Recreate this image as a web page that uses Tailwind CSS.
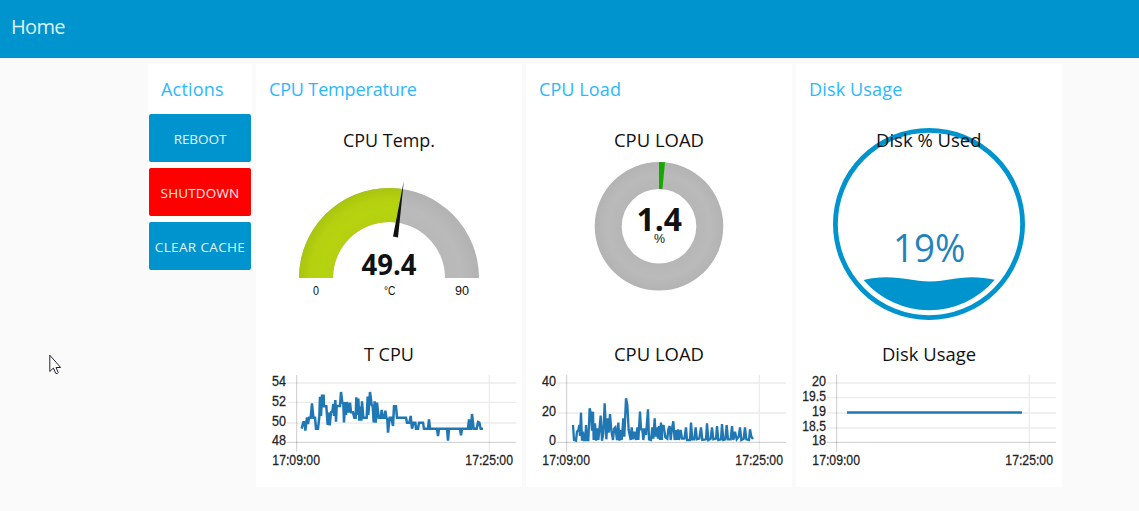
<!DOCTYPE html>
<html lang="en">
<head>
<meta charset="utf-8">
<title>Home</title>
<script src="https://cdn.jsdelivr.net/npm/@tailwindcss/browser@4"></script>
</head>
<body class="h-screen overflow-hidden bg-[#fafafa] font-['Open_Sans',sans-serif] text-[#111]">
<header class="flex h-[58px] items-center bg-[#0094ce] px-[11px] pb-[4px]">
  <h1 class="text-[20px] leading-none tracking-[-0.65px] text-[#dff1f9]">Home</h1>
</header>
<main class="flex items-start gap-1 pt-[6px] pl-[148px]">
  <section class="flex h-[207px] w-[104px] flex-col bg-white">
    <h2 class="flex h-[50px] shrink-0 items-center pl-[13px] text-[18px] tracking-[0.2px] text-[#2bb8ff]">Actions</h2>
    <div class="flex flex-col gap-[6px] px-px">
      <button class="h-12 rounded-[2px] bg-[#0094ce] pt-[2px] text-[13.5px] tracking-[-0.05px] whitespace-nowrap text-[#e6f5fb]">REBOOT</button>
      <button class="h-12 rounded-[2px] bg-[#ff0000] pt-[2px] text-[13.5px] tracking-[0.15px] whitespace-nowrap text-[#ffeaea]">SHUTDOWN</button>
      <button class="h-12 rounded-[2px] bg-[#0094ce] pt-[2px] text-[13.5px] tracking-[0.35px] whitespace-nowrap text-[#e6f5fb]">CLEAR CACHE</button>
    </div>
  </section>

  <section class="flex h-[423px] w-[266px] flex-col bg-white">
    <h2 class="flex h-[50px] shrink-0 items-center pl-[13px] text-[18px] tracking-[-0.15px] text-[#2bb8ff]">CPU Temperature</h2>
    <svg class="block h-[226px] w-[266px]" viewBox="0 114 266 226">
      <defs>
        <radialGradient id="lime" gradientUnits="userSpaceOnUse" cx="133" cy="278" r="90"><stop offset=".62" stop-color="#b4cf11"/><stop offset=".75" stop-color="#b6d30f"/><stop offset=".88" stop-color="#b4d00f"/><stop offset="1" stop-color="#a9c40e"/></radialGradient>
        <radialGradient id="gray" gradientUnits="userSpaceOnUse" cx="133" cy="278" r="90"><stop offset=".62" stop-color="#b8b8b8"/><stop offset=".8" stop-color="#bababa"/><stop offset="1" stop-color="#b2b2b2"/></radialGradient>
      </defs>
      <text x="87" y="147" font-size="18" textLength="92" lengthAdjust="spacingAndGlyphs" fill="#111">CPU Temp.</text>
      <path fill="url(#gray)" d="M43 278A90 90 0 0 1 223 278H189A56 56 0 0 0 77 278Z"/>
      <path fill="url(#lime)" d="M43 278A90 90 0 0 1 146.8 189.1L141.6 222.7A56 56 0 0 0 77 278Z"/>
      <path fill="#111" d="M147.8 181L142 237.6L137 236.6Z"/>
      <text x="105.5" y="275" font-size="28" font-weight="700" textLength="55" lengthAdjust="spacingAndGlyphs" fill="#111">49.4</text>
      <g font-family="Liberation Sans" fill="#111">
        <text x="57" y="295" font-size="12" textLength="6" lengthAdjust="spacingAndGlyphs">0</text>
        <text x="128" y="295" font-size="12" textLength="11.5" lengthAdjust="spacingAndGlyphs">°C</text>
        <text x="199" y="295" font-size="12.5" textLength="14" lengthAdjust="spacingAndGlyphs">90</text>
      </g>
    </svg>
    <svg class="block h-[147px] w-[266px]" viewBox="0 0 798 441">
      <text x="324" y="63" font-size="54" textLength="150" lengthAdjust="spacingAndGlyphs" fill="#111">T CPU</text>
      <path stroke="#000" stroke-opacity=".08" stroke-width="4" fill="none" d="M92 129H780M92 187H780M92 249H780M700 105V335"/>
      <path stroke="#000" stroke-opacity=".2" stroke-width="3" fill="none" d="M92 307H780M122 105V335"/>
      <g font-family="Liberation Sans" font-size="44" fill="#222" stroke="#222" stroke-width=".8" text-anchor="end">
        <text x="90" y="138" textLength="42" lengthAdjust="spacingAndGlyphs">54</text>
        <text x="90" y="197" textLength="42" lengthAdjust="spacingAndGlyphs">52</text>
        <text x="90" y="258" textLength="42" lengthAdjust="spacingAndGlyphs">50</text>
        <text x="90" y="316" textLength="42" lengthAdjust="spacingAndGlyphs">48</text>
        <text x="192" y="376" textLength="143" lengthAdjust="spacingAndGlyphs">17:09:00</text>
        <text x="771" y="376" textLength="143" lengthAdjust="spacingAndGlyphs">17:25:00</text>
      </g>
      <polyline fill="none" stroke="#1f77b4" stroke-width="7.5" points="137,266 142,247 146,247 148,272 153,232 156,252 159,233 164,233 168,190 172,233 177,233 180,266 186,266 190,230 192,170 195,228 198,167 203,167 204,199 211,199 215,255 218,218 221,256 225,217 229,215 232,192 234,228 238,180 240,245 242,198 252,198 255,156 259,188 262,190 264,247 267,186 270,225 273,186 277,218 282,188 285,217 291,217 295,233 299,233 301,172 304,225 307,176 310,242 313,200 316,242 318,184 322,233 332,233 335,170 337,225 342,156 347,195 350,198 353,247 356,184 359,248 363,188 368,233 374,233 377,210 380,233 385,233 388,212 391,233 394,238 396,278 401,233 406,233 411,258 414,199 420,199 423,233 450,233 453,248 460,248 464,228 468,266 473,248 478,248 480,266 486,266 489,248 501,248 504,266 516,266 519,238 522,266 543,266 546,288 549,266 573,266 576,302 579,266 612,266 615,286 618,266 636,266 639,238 642,266 645,266 648,222 653,266 662,266 666,246 670,248 674,266 681,266"/>
    </svg>
  </section>

  <section class="flex h-[423px] w-[266px] flex-col bg-white">
    <h2 class="flex h-[50px] shrink-0 items-center pl-[13px] text-[18px] tracking-[0.1px] text-[#2bb8ff]">CPU Load</h2>
    <svg class="block h-[226px] w-[266px]" viewBox="0 114 266 226">
      <defs>
        <radialGradient id="ring" gradientUnits="userSpaceOnUse" cx="133" cy="226.3" r="64.3"><stop offset=".58" stop-color="#b6b6b6"/><stop offset=".8" stop-color="#bababa"/><stop offset="1" stop-color="#b3b3b3"/></radialGradient>
      </defs>
      <text x="88" y="147" font-size="18" textLength="90" lengthAdjust="spacingAndGlyphs" fill="#111">CPU LOAD</text>
      <path fill="url(#ring)" fill-rule="evenodd" d="M133 162a64.3 64.3 0 1 1 0 128.6a64.3 64.3 0 1 1 0-128.6ZM133 189a37.3 37.3 0 1 0 0 74.6a37.3 37.3 0 1 0 0-74.6Z"/>
      <path fill="#14a800" d="M133 162A64.3 64.3 0 0 1 139 162.3L136.4 189.2L133 189Z"/>
      <text x="110.500" y="231" font-size="31.5" font-weight="700" textLength="45.500" lengthAdjust="spacingAndGlyphs" fill="#111">1.4</text>
      <text x="128" y="243" font-size="12" font-family="Liberation Sans" textLength="11" lengthAdjust="spacingAndGlyphs" fill="#111">%</text>
    </svg>
    <svg class="block h-[147px] w-[266px]" viewBox="0 0 798 441">
      <text x="264" y="63" font-size="54" textLength="270" lengthAdjust="spacingAndGlyphs" fill="#111">CPU LOAD</text>
      <path stroke="#000" stroke-opacity=".08" stroke-width="4" fill="none" d="M92 129H780M92 219H780M700 105V335"/>
      <path stroke="#000" stroke-opacity=".2" stroke-width="3" fill="none" d="M92 307H780M122 105V335"/>
      <g font-family="Liberation Sans" font-size="44" fill="#222" stroke="#222" stroke-width=".8" text-anchor="end">
        <text x="90" y="138" textLength="42" lengthAdjust="spacingAndGlyphs">40</text>
        <text x="90" y="229" textLength="42" lengthAdjust="spacingAndGlyphs">20</text>
        <text x="90" y="316" textLength="21" lengthAdjust="spacingAndGlyphs">0</text>
        <text x="192" y="376" textLength="143" lengthAdjust="spacingAndGlyphs">17:09:00</text>
        <text x="771" y="376" textLength="143" lengthAdjust="spacingAndGlyphs">17:25:00</text>
      </g>
      <polyline fill="none" stroke="#1f77b4" stroke-width="7" points="141,255 144,300 150,302 153,275 157,270 160,255 162,288 165,218 168,302 171,275 174,300 178,300 180,255 183,300 187,300 191,205 195,222 198,272 201,215 203,300 207,250 210,302 213,265 217,300 220,270 224,227 228,302 232,280 236,190 240,270 241,298 245,235 248,278 252,222 256,272 261,300 264,266 268,262 273,300 277,248 280,302 283,270 287,300 292,235 295,290 300,175 304,195 308,270 314,300 317,262 321,298 325,275 330,300 334,262 337,300 342,215 345,268 349,268 352,300 356,265 360,285 366,208 369,298 375,300 379,262 382,296 386,235 389,290 393,262 396,296 399,258 402,300 405,248 408,300 408,257 413,258 418,292 424,296 427,268 431,258 434,300 438,265 442,244 446,300 450,270 453,300 456,268 459,300 464,270 468,296 475,296 480,262 483,300 492,300 495,248 499,298 505,298 509,262 513,298 520,296 525,262 529,300 540,298 543,250 547,300 554,296 558,262 562,298 570,296 573,258 577,300 585,298 588,252 592,300 598,298 602,255 606,298 614,298 618,258 622,300 627,275 632,298 638,290 642,262 646,300 653,296 657,262 661,298 669,300 672,268 676,290 681,297"/>
    </svg>
  </section>

  <section class="flex h-[423px] w-[266px] flex-col bg-white">
    <h2 class="flex h-[50px] shrink-0 items-center pl-[13px] text-[18px] tracking-[0.15px] text-[#2bb8ff]">Disk Usage</h2>
    <svg class="block h-[226px] w-[266px]" viewBox="0 114 266 226">
      <circle cx="133" cy="224" r="93.6" fill="none" stroke="#0094ce" stroke-width="4.8"/>
      <path fill="#0094ce" d="M67.5 280C75 278.4 82 277.3 90 277.3C107 277.3 118 281.5 134 281.5C150 281.5 160 277.3 176 277.3C184 277.3 191 278.2 198.8 279.7A86.2 86.2 0 0 1 67.5 280Z"/>
      <text x="80" y="147" font-size="18" textLength="105.500" lengthAdjust="spacingAndGlyphs" fill="#111">Disk % Used</text>
      <text x="97" y="262" font-size="37.5" textLength="72.5" lengthAdjust="spacingAndGlyphs" fill="#1f83bd">19%</text>
    </svg>
    <svg class="block h-[147px] w-[266px]" viewBox="0 0 798 441">
      <text x="258" y="63" font-size="54" textLength="282" lengthAdjust="spacingAndGlyphs" fill="#111">Disk Usage</text>
      <path stroke="#000" stroke-opacity=".08" stroke-width="4" fill="none" d="M92 129H780M92 173H780M92 219H780M92 264H780M700 105V335"/>
      <path stroke="#000" stroke-opacity=".2" stroke-width="3" fill="none" d="M92 307H780M122 105V335"/>
      <g font-family="Liberation Sans" font-size="44" fill="#222" stroke="#222" stroke-width=".8" text-anchor="end">
        <text x="90" y="138" textLength="42" lengthAdjust="spacingAndGlyphs">20</text>
        <text x="90" y="182" textLength="71" lengthAdjust="spacingAndGlyphs">19.5</text>
        <text x="90" y="229" textLength="42" lengthAdjust="spacingAndGlyphs">19</text>
        <text x="90" y="273" textLength="71" lengthAdjust="spacingAndGlyphs">18.5</text>
        <text x="90" y="316" textLength="42" lengthAdjust="spacingAndGlyphs">18</text>
        <text x="192" y="376" textLength="143" lengthAdjust="spacingAndGlyphs">17:09:00</text>
        <text x="771" y="376" textLength="143" lengthAdjust="spacingAndGlyphs">17:25:00</text>
      </g>
      <path stroke="#1f77b4" stroke-width="7.5" d="M153 217.5H678"/>
    </svg>
  </section>
</main>
<svg class="absolute top-[354px] left-[49px] h-[22px] w-[14px]" viewBox="0 0 14 22"><path fill="#fff" stroke="#223" stroke-width="1" stroke-linejoin="round" d="M.8 1.2V17.5L4.4 14L6.8 19.4Q8.5 20.3 9.2 18.5L7 13.5H11.6Z"/></svg>
</body>
</html>
